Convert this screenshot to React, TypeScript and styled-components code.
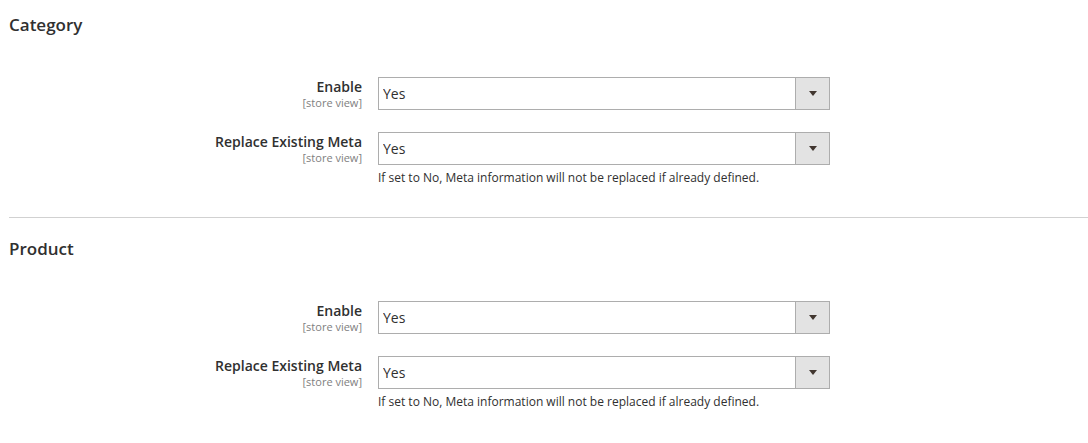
import styled, { createGlobalStyle } from "styled-components";

const GlobalStyle = createGlobalStyle`
  html, body {
    margin: 0;
    padding: 0;
    background: #ffffff;
  }
  body {
    font-family: "Open Sans", "Liberation Sans", sans-serif;
    color: #303030;
  }
`;

const Page = styled.div`
  padding-left: 9px;
  overflow: hidden;
`;

const Section = styled.section<{ $first?: boolean }>`
  padding-top: ${(p) => (p.$first ? "15px" : "21px")};
  padding-bottom: 31px;
  border-top: ${(p) => (p.$first ? "none" : "1px solid #d1d1d1")};
`;

const Title = styled.h2`
  margin: 0;
  font-size: 17px;
  line-height: 20px;
  font-weight: 600;
  color: #303030;
`;

const Fieldset = styled.div`
  margin-top: 42px;
  display: flex;
  flex-direction: column;
  gap: 22px;
`;

const Row = styled.div`
  display: grid;
  grid-template-columns: 353px 452px;
  column-gap: 16px;
  align-items: start;
`;

const Label = styled.label`
  display: flex;
  flex-direction: column;
  align-items: flex-end;
  text-align: right;
  padding-top: 1px;
`;

const LabelText = styled.span`
  font-size: 14px;
  line-height: 18px;
  font-weight: 600;
  color: #303030;
`;

const Scope = styled.span`
  font-size: 11px;
  line-height: 13px;
  color: #808080;
`;

const Control = styled.div`
  display: flex;
  flex-direction: column;
`;

const SelectWrap = styled.div`
  position: relative;
  height: 33px;
`;

const Select = styled.select`
  appearance: none;
  -webkit-appearance: none;
  width: 100%;
  height: 33px;
  margin: 0;
  padding: 0 40px 0 4px;
  border: 1px solid #adadad;
  border-radius: 0;
  background: #ffffff;
  font-family: "Open Sans", "Liberation Sans", sans-serif;
  font-size: 14px;
  color: #303030;
  outline: none;
`;

const Arrow = styled.span`
  position: absolute;
  top: 1px;
  right: 1px;
  bottom: 1px;
  width: 33px;
  border-left: 1px solid #adadad;
  background: #e3e3e3;
  display: flex;
  align-items: center;
  justify-content: center;
  pointer-events: none;

  &::after {
    content: "";
    width: 0;
    height: 0;
    border-left: 4px solid transparent;
    border-right: 4px solid transparent;
    border-top: 5px solid #41362f;
  }
`;

const Note = styled.p`
  margin: 5px 0 0;
  font-size: 12px;
  line-height: 16px;
  color: #303030;
`;

type Field = { label: string; note?: string };

const fields: Field[] = [
  { label: "Enable" },
  {
    label: "Replace Existing Meta",
    note: "If set to No, Meta information will not be replaced if already defined.",
  },
];

function ConfigSection({ title, first }: { title: string; first?: boolean }) {
  return (
    <Section $first={first}>
      <Title>{title}</Title>
      <Fieldset>
        {fields.map((f) => (
          <Row key={f.label}>
            <Label>
              <LabelText>{f.label}</LabelText>
              <Scope>[store view]</Scope>
            </Label>
            <Control>
              <SelectWrap>
                <Select defaultValue="1">
                  <option value="1">Yes</option>
                  <option value="0">No</option>
                </Select>
                <Arrow />
              </SelectWrap>
              {f.note && <Note>{f.note}</Note>}
            </Control>
          </Row>
        ))}
      </Fieldset>
    </Section>
  );
}

export default function App() {
  return (
    <>
      <GlobalStyle />
      <Page>
        <ConfigSection title="Category" first />
        <ConfigSection title="Product" />
      </Page>
    </>
  );
}
